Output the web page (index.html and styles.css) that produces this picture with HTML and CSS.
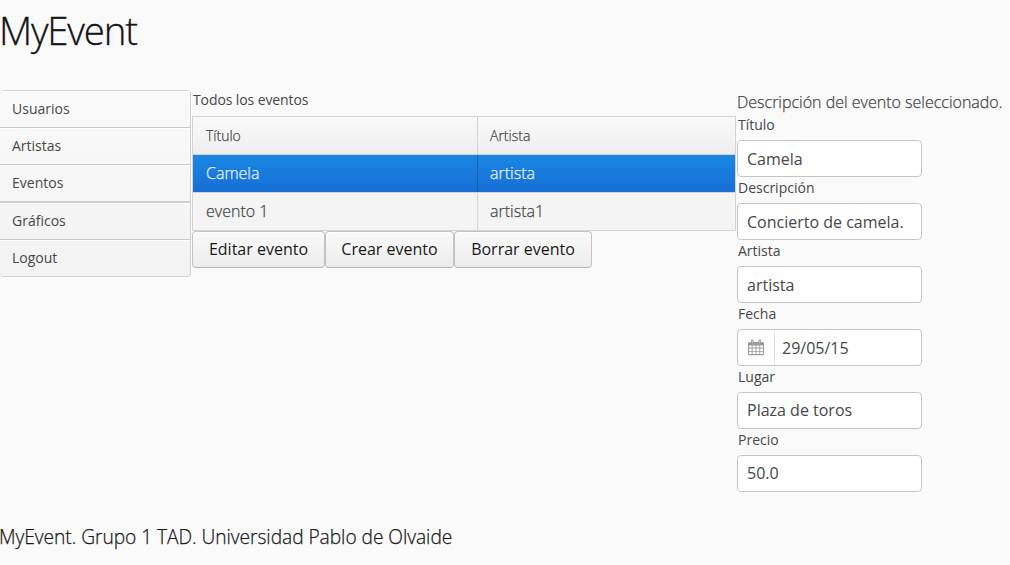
FILE: index.html
```html
<!DOCTYPE html>
<html lang="es">
<head>
<meta charset="utf-8">
<title>MyEvent</title>
<link rel="stylesheet" href="styles.css">
</head>
<body>
<header><h1 class="title">MyEvent</h1></header>
<main class="main">
  <nav class="menu">
    <a class="menu-item">Usuarios</a>
    <a class="menu-item">Artistas</a>
    <a class="menu-item tall">Eventos</a>
    <a class="menu-item">Gráficos</a>
    <a class="menu-item">Logout</a>
  </nav>
  <section class="events">
    <div class="caption">Todos los eventos</div>
    <div class="table">
      <div class="row head"><div class="cell first">Título</div><div class="cell">Artista</div></div>
      <div class="row selected"><div class="cell first">Camela</div><div class="cell">artista</div></div>
      <div class="row"><div class="cell first">evento 1</div><div class="cell">artista1</div></div>
    </div>
    <div class="buttons">
      <button class="button edit">Editar evento</button>
      <button class="button create">Crear evento</button>
      <button class="button delete">Borrar evento</button>
    </div>
  </section>
  <section class="form">
    <p class="intro">Descripción del evento seleccionado.</p>
    <div class="label">Título</div><div class="field">Camela</div>
    <div class="label">Descripción</div><div class="field">Concierto de camela.</div>
    <div class="label">Artista</div><div class="field">artista</div>
    <div class="label">Fecha</div>
    <div class="field date">
      <span class="date-button">
        <svg width="16" height="17" viewBox="0 0 16 17">
          <path fill="#9b9b9b" fill-rule="evenodd" d="M1 3h2V1.500Q3 .4 4 .4h.6q1 0 1 1.100V3h4.800V1.500q0-1.100 1-1.100h.6q1 0 1 1.100V3h1.800q1.200 0 1.200 1.100v11q0 1.100-1.100 1.100H1.100Q0 16.200 0 15.100V4.100Q0 3 1 3zM1.100 6.500v2.100h2.600V6.500zm3.500 0v2.100h2.900V6.500zm3.800 0v2.100h2.900V6.500zm3.800 0v2.100h2.700V6.500zM1.100 9.500v2.400h2.600V9.500zm3.500 0v2.400h2.900V9.500zm3.800 0v2.400h2.900V9.500zm3.800 0v2.400h2.700V9.500zM1.100 12.800v2.300h2.600v-2.300zm3.500 0v2.300h2.900v-2.300zm3.800 0v2.300h2.900v-2.300zm3.800 0v2.300h2.700v-2.300z"/>
          <path stroke="#e0e0e0" stroke-width=".7" d="M4.300 1.500v2.600M11.700 1.500v2.600"/>
        </svg>
      </span>
      <span class="date-value">29/05/15</span>
    </div>
    <div class="label">Lugar</div><div class="field high">Plaza de toros</div>
    <div class="label">Precio</div><div class="field high">50.0</div>
  </section>
</main>
<footer class="footer">MyEvent. Grupo 1 TAD. Universidad Pablo de Olvaide</footer>
</body>
</html>
```
FILE: styles.css
```css
* { box-sizing: border-box; }
body {
  margin: 0;
  height: 565px;
  overflow: hidden;
  background: #fafafa;
  color: #474747;
  font: 300 16px/24px "Open Sans", sans-serif;
  white-space: nowrap;
}
header { height: 90px; padding-top: 7px; }
.title {
  margin: 0 0 0 -1px;
  color: #141414;
  font-size: 38.4px;
  font-weight: 300;
  line-height: 46px;
  letter-spacing: -1.2px;
  -webkit-text-stroke: .3px;
}
.main { display: flex; height: 433px; }
.menu {
  width: 191px;
  height: 187px;
  border: 1px solid #d3d3d3;
  border-left: 0;
  border-radius: 4px;
  background: linear-gradient(#fafafa, #f2f2f2);
  font-size: 14px;
  font-weight: 400;
}
.menu-item {
  display: block;
  height: 37px;
  padding-left: 12px;
  line-height: 35px;
  border-bottom: 1px solid #c9c9c9;
  box-shadow: inset 0 1px #fff;
}
.menu-item.tall { height: 38px; border-bottom: 2px solid #d0d0d0; }
.menu-item:last-child { border-bottom: 0; height: 36px; }
.events { width: 544px; margin-left: 1px; }
.caption {
  height: 26px;
  padding-left: 1px;
  font-size: 14px;
  font-weight: 400;
  line-height: 20px;
  letter-spacing: -.1px;
}
.table { height: 115px; border: 1px solid #d4d4d4; -webkit-text-stroke: .25px; }
.row { display: flex; height: 37px; background: #f4f4f4; line-height: 37px; }
.cell { flex: 1; padding-left: 12px; }
.cell.first { flex: none; width: 285px; padding-left: 13px; border-right: 1px solid #d4d4d4; }
.head {
  height: 38px;
  border-bottom: 1px solid #d4d4d4;
  background: linear-gradient(#fafafa, #eeeeee);
  font-size: 14px;
}
.selected {
  height: 38px;
  border-bottom: 1px solid #d4d4d4;
  background: linear-gradient(#1b87e3, #166ed5);
  background-clip: padding-box;
  color: #eaf3fc;
}
.selected .first { border-color: #1362b5; }
.buttons { display: flex; }
.button {
  height: 37px;
  padding: 0 0 1px;
  border: 1px solid #c3c3c3;
  border-bottom-color: #bababa;
  border-radius: 4px;
  background: linear-gradient(#fafafa, #ededed);
  box-shadow: inset 0 1px #fff, inset 0 -1px #e9e9e9;
  color: #191919;
  font: 400 16px/34px "Open Sans", sans-serif;
}
.edit { width: 133px; }
.create { width: 129px; }
.delete { width: 138px; }
.form { width: 273px; padding-left: 1px; }
.intro { margin: 0; height: 24px; -webkit-text-stroke: .25px; }
.label {
  height: 26px;
  padding-left: 1px;
  font-size: 14px;
  font-weight: 400;
  line-height: 22px;
}
.field {
  width: 185px;
  height: 37px;
  padding-left: 9px;
  border: 1px solid #c5c5c5;
  border-radius: 4px;
  background: #fff;
  font-weight: 400;
  line-height: 36px;
}
.field.high { line-height: 34px; }
.date { display: flex; padding: 0; }
.date-button {
  display: flex;
  width: 37px;
  padding: 9px 0 0 10px;
  border-right: 1px solid #e4e4e4;
}
.date-value { padding-left: 7px; }
.footer {
  margin-left: -1px;
  color: #191919;
  font-size: 19.2px;
  line-height: 28px;
  letter-spacing: -.05px;
  -webkit-text-stroke: .25px;
}
```
